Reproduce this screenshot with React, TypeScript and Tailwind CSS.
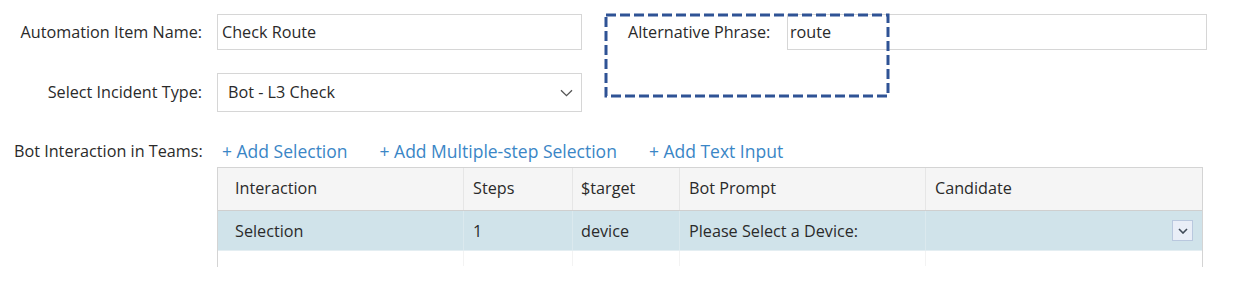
import React from "react";

const Chevron = ({ className = "" }: { className?: string }) => (
  <svg className={className} width="13" height="8" viewBox="0 0 13 8" fill="none">
    <path d="M1 1.2 L6.5 6.7 L12 1.2" stroke="#555" strokeWidth="1.3" />
  </svg>
);

export default function App() {
  const cols = "grid grid-cols-[246px_109px_107px_246px_1fr]";
  return (
    <div className="relative w-[1236px] h-[304px] bg-white text-[16.2px] text-[#2a2a2a] font-['Open_Sans',sans-serif] overflow-hidden">
      <div className="flex flex-col pt-[14px]">
        {/* Row 1 */}
        <div className="flex items-center h-[36px]">
          <div className="w-[202px] text-right">Automation Item Name:</div>
          <div className="ml-[15px] w-[365px] h-[36px] border border-[#d6d6d6] flex items-center pl-[4px]">
            Check Route
          </div>
          <div className="ml-[46px] w-[159px]">Alternative Phrase:</div>
          <div className="w-[420px] h-[36px] border border-[#d6d6d6] flex items-center pl-[2px]">route</div>
        </div>
        {/* Row 2 */}
        <div className="flex items-center h-[39px] mt-[23px]">
          <div className="w-[202px] text-right">Select Incident Type:</div>
          <div className="ml-[15px] w-[365px] h-[39px] border border-[#d6d6d6] flex items-center justify-between pl-[10px] pr-[8px]">
            <span>Bot - L3 Check</span>
            <Chevron />
          </div>
        </div>
        {/* Row 3 */}
        <div className="flex items-center h-[22px] mt-[28px]">
          <div className="w-[202px] pl-[14px] whitespace-nowrap">Bot Interaction in Teams:</div>
          <div className="ml-[20px] flex gap-[32px] text-[17.5px] text-[#3a86c6] whitespace-nowrap">
            <span>+ Add Selection</span>
            <span>+ Add Multiple-step Selection</span>
            <span>+ Add Text Input</span>
          </div>
        </div>
        {/* Table */}
        <div className="ml-[217px] mt-[5px] w-[986px] h-[100px] border-l border-r border-t border-[#d4d4d4]">
          <div className={`${cols} h-[43px] bg-[#f5f5f5] border-b border-[#cfcfcf]`}>
            <div className="pl-[17px] pb-[1px] flex items-center border-r border-[#e6e6e6]">Interaction</div>
            <div className="pl-[9px] pb-[1px] flex items-center border-r border-[#e6e6e6]">Steps</div>
            <div className="pl-[8px] pb-[1px] flex items-center border-r border-[#e6e6e6]">$target</div>
            <div className="pl-[9px] pb-[1px] flex items-center border-r border-[#e6e6e6]">Bot Prompt</div>
            <div className="pl-[9px] pb-[1px] flex items-center">Candidate</div>
          </div>
          <div className={`${cols} h-[40px] bg-[#d0e3ea] border-b border-[#e4eef2]`}>
            <div className="pl-[17px] pt-[2px] flex items-center border-r border-[#dbe9ee]">Selection</div>
            <div className="pl-[9px] pt-[2px] flex items-center border-r border-[#dbe9ee]">1</div>
            <div className="pl-[8px] pt-[2px] flex items-center border-r border-[#dbe9ee]">device</div>
            <div className="pl-[9px] pt-[2px] flex items-center border-r border-[#dbe9ee]">Please Select a Device:</div>
            <div className="flex items-center justify-end pr-[9px]">
              <div className="w-[21px] h-[21px] border border-[#b9c8de] bg-[#e9eef7] flex items-center justify-center">
                <svg width="10" height="6" viewBox="0 0 10 6" fill="none">
                  <path d="M1 1 L5 5 L9 1" stroke="#3f4a57" strokeWidth="1.6" />
                </svg>
              </div>
            </div>
          </div>
          <div className={`${cols} h-[15px]`}>
            <div className="border-r border-[#f3f3f3]" />
            <div className="border-r border-[#f3f3f3]" />
            <div className="border-r border-[#f3f3f3]" />
            <div className="border-r border-[#f3f3f3]" />
            <div />
          </div>
        </div>
      </div>
      {/* Dashed annotation overlay */}
      <svg className="absolute left-[604px] top-[13px] pointer-events-none" width="286" height="85" viewBox="0 0 286 85">
        <rect x="2" y="2" width="282" height="81" fill="none" stroke="#2f5395" strokeWidth="3" strokeDasharray="10 4" />
      </svg>
    </div>
  );
}
